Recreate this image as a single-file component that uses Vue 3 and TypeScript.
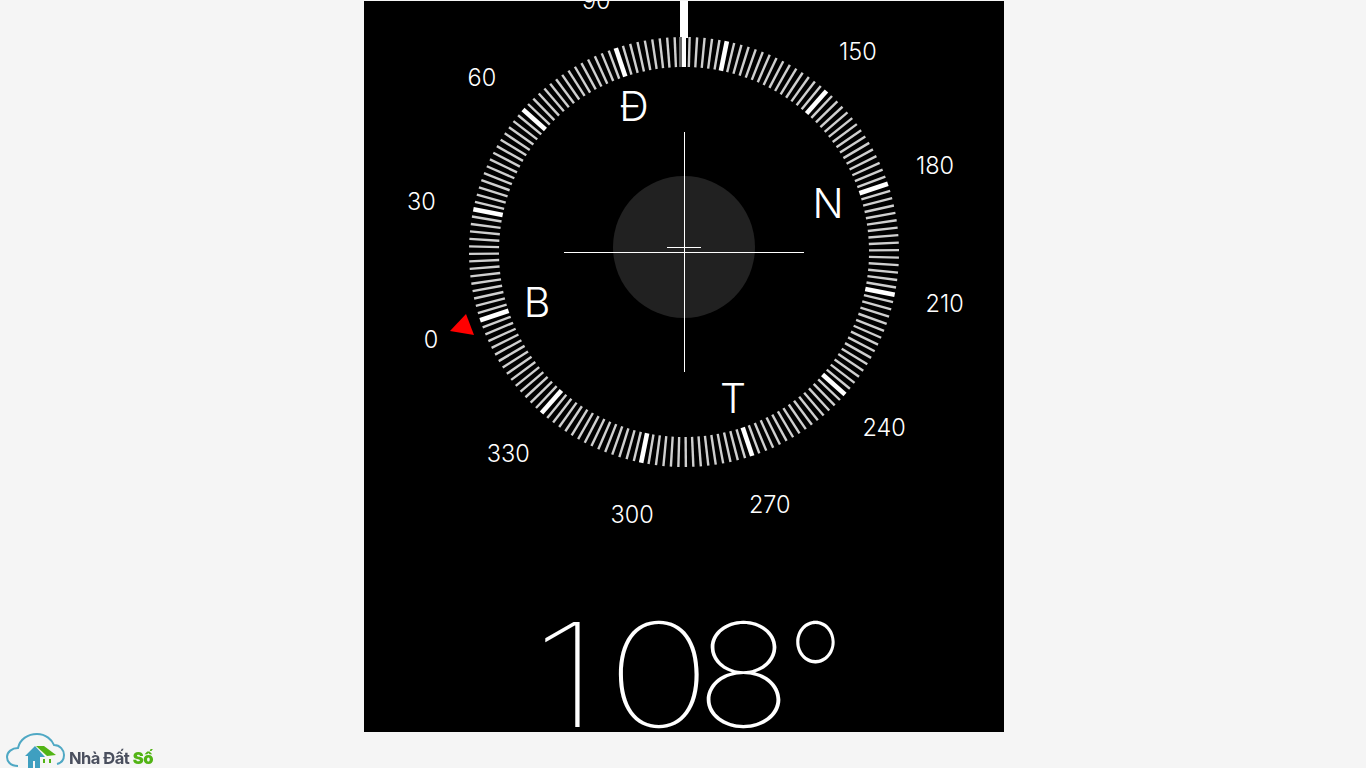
<template>
  <div class="page">
    <main class="panel">
      <svg class="dial" width="640" height="590" viewBox="-320 -251 640 590">
        <g transform="rotate(-108.5)">
          <line
            v-for="tick in ticks"
            :key="tick.deg"
            :class="tick.major ? 'major' : 'minor'"
            x1="0"
            y1="-215"
            x2="0"
            y2="-185"
            :transform="`rotate(${tick.deg})`"
          />
        </g>
        <rect class="needle" x="-4" y="-251" width="8" height="37" />
        <rect class="needle-shade" x="-5" y="-215" width="3" height="30" />
        <rect class="needle" x="-2" y="-215" width="4" height="30" />
        <circle class="level" cx="0" cy="-5" r="71" />
        <line class="cross" x1="-120" y1="0.5" x2="120" y2="0.5" />
        <line class="cross" x1="0.5" y1="-120" x2="0.5" y2="120" />
        <line class="cross" x1="-17" y1="-4.5" x2="17" y2="-4.5" />
        <polygon class="pointer" points="-218,62 -234,79 -210,83" />
        <text
          v-for="label in degreeLabels"
          :key="label.text"
          class="degree"
          :x="label.x"
          :y="label.y"
        >{{ label.text }}</text>
        <text
          v-for="label in cardinals"
          :key="label.text"
          class="cardinal"
          :x="label.x"
          :y="label.y"
        >{{ label.text }}</text>
      </svg>
      <div class="heading">
        <span class="digit one">1</span>
        <span class="digit zero">0</span>
        <span class="digit eight">8</span>
        <span class="digit ring">°</span>
      </div>
    </main>
    <div class="brand">
      <svg class="cloud" width="65" height="38" viewBox="0 0 65 38">
        <path class="cloud-line" d="M14 36 C6 36 3 31 3 27 C3 22 8 18 14 18 C16 9 24 4 33 4 C42 4 48 10 50 15 C56 15 60 20 60 25 C60 30 57 33 53 34" />
        <path class="house" d="M31 16 L21 26 L24 26 L24 38 L36 38 L36 27 L41 27 Z" />
        <path class="roof" d="M32 16 L40 16 L52 25 L43 26 Z" />
        <rect class="door" x="29" y="31" width="2" height="7" />
        <rect class="window" x="39" y="29" width="2" height="4" />
        <rect class="window" x="45" y="29" width="2" height="4" />
      </svg>
      <span class="brand-name">Nhà Đất <b>Số</b></span>
    </div>
  </div>
</template>

<script setup lang="ts">
const ROTATION = -109
const LABEL_RADIUS = 266.5

const ticks = Array.from({ length: 180 }, (_, i) => ({
  deg: i * 2,
  major: i % 15 === 0,
}))

function polar(deg: number, radius: number) {
  const a = ((deg + ROTATION) * Math.PI) / 180
  return { x: radius * Math.sin(a) - 1, y: 0.5 - radius * Math.cos(a) }
}

const degreeLabels = Array.from({ length: 12 }, (_, i) => ({
  text: String(i * 30),
  ...polar(i * 30, LABEL_RADIUS),
}))

const cardinals = [
  { text: 'B', x: -147, y: 50 },
  { text: 'Đ', x: -50, y: -146 },
  { text: 'N', x: 144, y: -49 },
  { text: 'T', x: 49, y: 146 },
]
</script>

<style>
html,
body {
  margin: 0;
  background: #f5f5f5;
}
</style>

<style scoped>
.page {
  width: 1366px;
  height: 768px;
  overflow: hidden;
  position: relative;
  background: #f5f5f5;
  padding: 1px 0 0 364px;
  box-sizing: border-box;
  font-family: Inter, "Liberation Sans", sans-serif;
}

.panel {
  width: 640px;
  height: 731px;
  background: #000;
  overflow: hidden;
  display: flex;
  flex-direction: column;
}

.dial {
  display: block;
  flex: none;
}

.minor {
  stroke: #cfcfcf;
  stroke-width: 2.4;
}

.major {
  stroke: #fff;
  stroke-width: 4.6;
}

.needle {
  fill: #fff;
}

.needle-shade {
  fill: #666;
}

.level {
  fill: #212121;
}

.cross {
  stroke: #fff;
  stroke-width: 1;
}

.pointer {
  fill: #f00;
}

.degree,
.cardinal {
  fill: #fff;
  font-weight: 300;
  text-anchor: middle;
  dominant-baseline: central;
}

.degree {
  font-size: 23.5px;
}

.cardinal {
  font-size: 41px;
}

.heading {
  display: flex;
  color: #fff;
  font-size: 144px;
  font-weight: 100;
  line-height: 1;
  padding: 12px 0 0 168px;
}

.digit {
  display: block;
  flex: none;
  transform-origin: left center;
}

.one {
  width: 74px;
  transform: scaleX(1.3);
}

.zero {
  width: 89px;
  transform: scaleX(1.24);
}

.eight {
  width: 91px;
  transform: scaleX(1.13);
}

.ring {
  transform: scaleX(0.9);
}

.brand {
  position: absolute;
  left: 4px;
  bottom: 0;
  display: flex;
  align-items: flex-end;
  filter: blur(0.4px);
}

.cloud {
  display: block;
}

.cloud-line {
  fill: none;
  stroke: #4fa8c4;
  stroke-width: 2;
}

.house {
  fill: #3f9fc0;
}

.door {
  fill: #f5f5f5;
}

.roof,
.window {
  fill: #52b415;
}

.brand-name {
  font-size: 16.5px;
  font-weight: 700;
  color: #4a4f5e;
  letter-spacing: -0.5px;
}

.brand-name b {
  color: #52b415;
}
</style>
